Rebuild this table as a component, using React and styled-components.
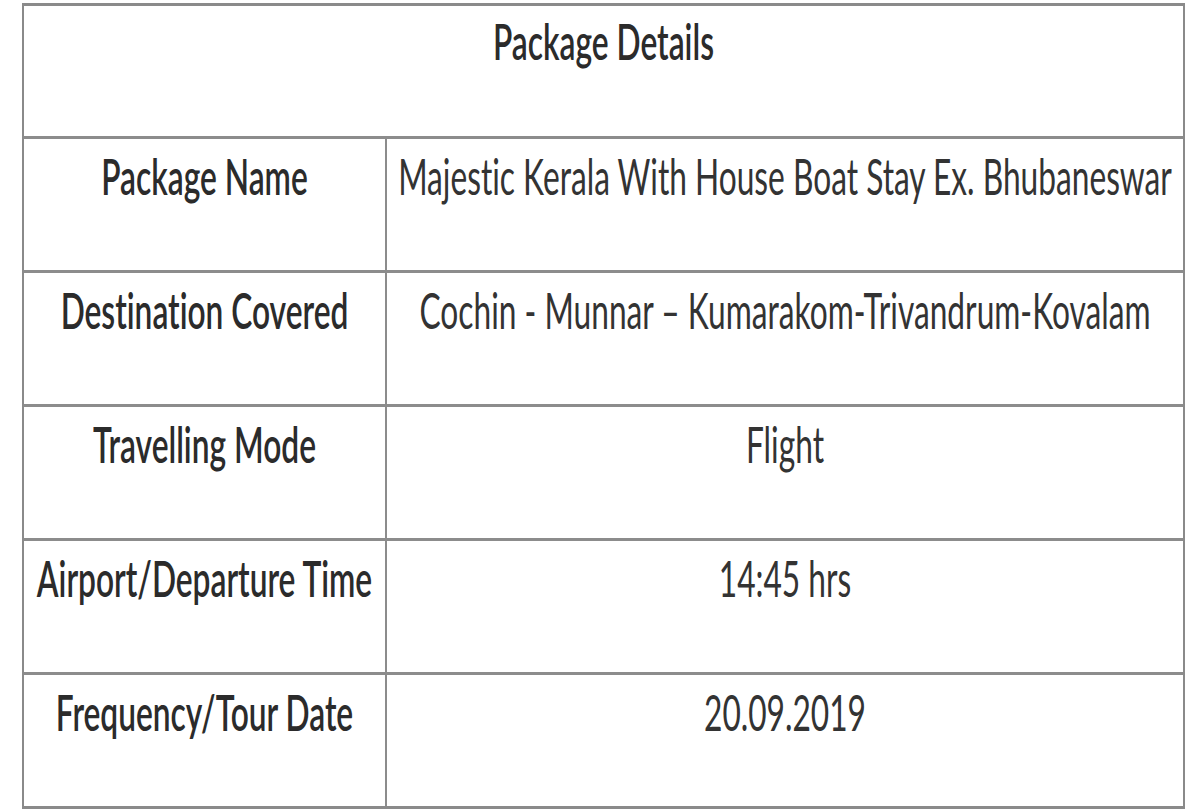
import { Fragment } from "react";
import styled, { createGlobalStyle } from "styled-components";

const GlobalStyle = createGlobalStyle`
  html, body {
    margin: 0;
    padding: 0;
    background: #ffffff;
  }

  body {
    font-family: Lato, "Open Sans", "Liberation Sans", sans-serif;
    color: #2f2f2f;
  }
`;

const Page = styled.div`
  width: 1200px;
  height: 810px;
  padding: 3px 0 0 22px;
  box-sizing: border-box;
`;

const Table = styled.div`
  width: 1163px;
  display: grid;
  grid-template-columns: 361px 1fr;
  grid-template-rows: 130px repeat(5, 134px);
  border: 2px solid #8a8a8a;
  border-top-width: 3px;
  border-bottom-width: 3px;
  box-sizing: border-box;
`;

const Cell = styled.div`
  grid-column: ${(p) => (p.$wide ? "1 / span 2" : "auto")};
  border-top: ${(p) => (p.$first ? "none" : "3px solid #8c8c8c")};
  border-left: ${(p) => (p.$value ? "2px solid #8c8c8c" : "none")};
  display: flex;
  justify-content: center;
  align-items: flex-start;
  padding-top: ${(p) => (p.$first ? "11px" : "13px")};
  box-sizing: border-box;
  overflow: hidden;
`;

const Text = styled.span`
  display: inline-block;
  font-size: 31.7px;
  line-height: 31.7px;
  font-weight: ${(p) => (p.$bold ? 600 : 400)};
  font-variant-ligatures: none;
  white-space: nowrap;
  transform: scaleY(1.6);
  transform-origin: top center;
  color: ${(p) => (p.$bold ? "#2b2b2b" : "#333333")};
`;

const rows = [
  ["Package Name", "Majestic Kerala With House Boat Stay Ex. Bhubaneswar"],
  ["Destination Covered", "Cochin - Munnar – Kumarakom-Trivandrum-Kovalam"],
  ["Travelling Mode", "Flight"],
  ["Airport/Departure Time", "14:45 hrs"],
  ["Frequency/Tour Date", "20.09.2019"],
];

const App = () => {
  return (
    <Page>
      <GlobalStyle />
      <Table>
        <Cell $wide $first>
          <Text $bold>Package Details</Text>
        </Cell>
        {rows.map(([label, value]) => (
          <Fragment key={label}>
            <Cell>
              <Text $bold>{label}</Text>
            </Cell>
            <Cell $value>
              <Text>{value}</Text>
            </Cell>
          </Fragment>
        ))}
      </Table>
    </Page>
  );
};

export default App;
